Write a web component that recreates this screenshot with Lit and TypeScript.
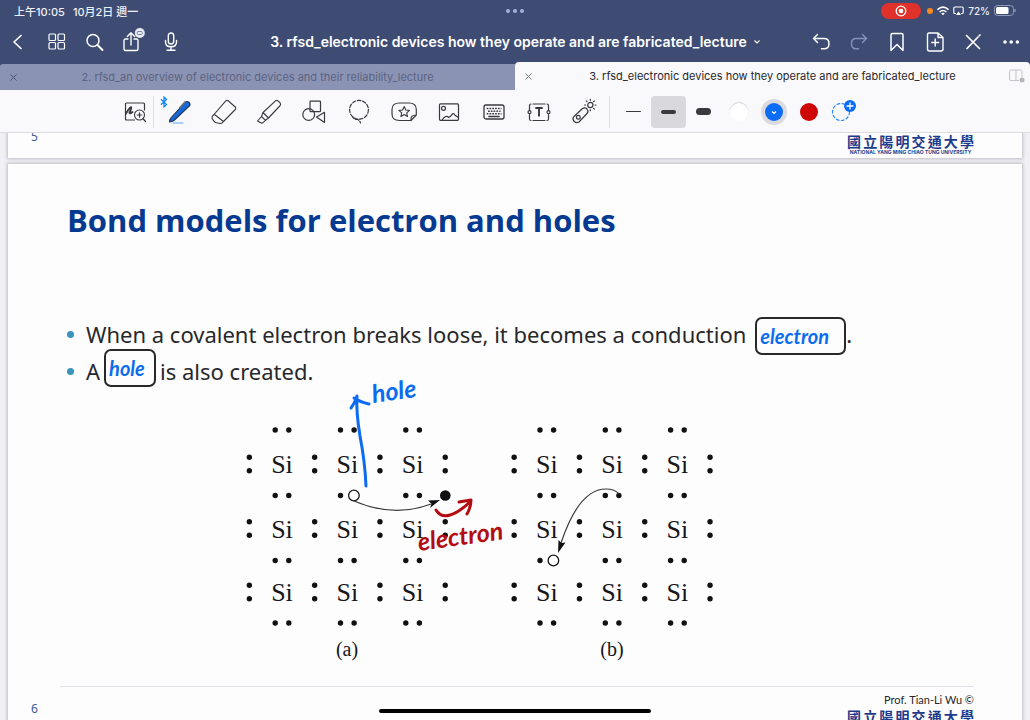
import { LitElement, html, svg, css, nothing, TemplateResult } from "lit";
import { customElement, property, state } from "lit/decorators.js";
import { classMap } from "lit/directives/class-map.js";

type Glyph = TemplateResult;

const ICONS: Record<string, Glyph> = {
  back: svg`<path d="M14 5.500 L7 12 L14 18.500" stroke-width="1.700"/>`,
  grid: svg`<rect x="4" y="4" width="6.500" height="6.500" rx="1"/><rect x="13" y="4" width="6.500" height="6.500" rx="1"/><rect x="4" y="12.500" width="6.500" height="6.500" rx="1"/><rect x="13" y="12.500" width="6.500" height="6.500" rx="1"/>`,
  search: svg`<circle cx="10" cy="10.500" r="6" stroke-width="1.500"/><path d="M14.500 15 L19.500 20" stroke-width="1.900"/>`,
  share: svg`<path d="M7 9 H4.500 Q3 9 3 10.500 V19 Q3 20.500 4.500 20.500 H15.500 Q17 20.500 17 19 V10.500 Q17 9 15.500 9 H13" stroke-width="1.400"/><path d="M10 15 V3 M6.300 6.500 L10 2.800 L13.700 6.500" stroke-width="1.400"/><circle cx="18.800" cy="3" r="5" fill="#e9ebf3" stroke="none"/><rect x="16.300" y="1.500" width="5" height="3" rx="1" stroke="#7b84a5" stroke-width="1"/>`,
  mic: svg`<rect x="9.300" y="3" width="5.400" height="11" rx="2.700" stroke-width="1.400"/><path d="M6.500 10.500 V12 Q6.500 16.800 12 16.800 Q17.500 16.800 17.500 12 V10.500 M12 17 V20 M8 20.300 H16" stroke-width="1.400"/>`,
  undo: svg`<path d="M8.500 4.500 L4.500 8.500 L8.500 12.500 M5 8.500 H15 Q20 8.500 20 13.500 Q20 18.800 15 18.800 H12.500" stroke-width="1.500"/>`,
  redo: svg`<path d="M15.500 4.500 L19.500 8.500 L15.500 12.500 M19 8.500 H9 Q4.500 8.500 4.500 13.500 Q4.500 18.800 9 18.800 H11.500" stroke-width="1.400"/>`,
  bookmark: svg`<path d="M6 20.500 V5 Q6 3.500 7.500 3.500 H16.500 Q18 3.500 18 5 V20.500 L12 14.500 Z" stroke-width="1.500"/>`,
  addPage: svg`<path d="M6 3 H15 L20 7.500 V19 Q20 21 18 21 H6.500 Q4.500 21 4.500 19 V5 Q4.500 3 6 3 Z M15 3 V7.500 H20 M12.200 9 V16 M8.700 12.500 H15.700" stroke-width="1.400"/>`,
  pencilOff: svg`<path d="M6 18.500 L17 7 M18.300 5.700 L19 5 M5.500 5.500 L18.500 18.500" stroke-width="1.700"/>`,
  more: svg`<g fill="currentColor" stroke="none"><circle cx="6" cy="12" r="1.800"/><circle cx="12.200" cy="12" r="1.800"/><circle cx="18.400" cy="12" r="1.800"/></g>`,
  lens: svg`<path d="M11.500 20 H3.500 Q2.500 20 2.500 19 V4 Q2.500 3 3.500 3 H20.500 Q21.500 3 21.500 4 V10" stroke-width="1.200"/><path d="M3 13.500 Q7.500 6 8.200 7.500 Q8.500 8.500 6.500 12.500 Q6.500 14.500 9.500 12" stroke-width="1.900"/><circle cx="16.500" cy="15" r="5" stroke-width="1.100"/><path d="M16.500 12.800 V17.200 M14.300 15 H18.700 M20 18.500 L22.500 21.500" stroke-width="1.200"/>`,
  pen: svg`<path d="M2.500 22 Q2.300 20 3.800 18 L17.500 3 Q19.500 0.500 22 2.300 Q24 4 22.200 6.200 L7.500 20 Q5 22 2.500 22 Z" fill="#1667d9" stroke="#253347" stroke-width="1.100"/><path d="M13 7.500 L18 2" stroke="#6a7078" stroke-width="1.800"/><path d="M6 23 H16" stroke="#5aa7f5" stroke-width="1.100"/>`,
  eraser: svg`<path d="M15.800 0.500 L23.300 7 Q24.300 8 23.300 9.500 L11.500 21.500 Q10.500 23.500 8 23.500 L3.500 22.500 Q0 19.500 0 17.500 Q0 16 2 14.500 L14 0.700 Q15 0 15.800 0.500 Z M2.500 14.500 L11.500 21.500" stroke-width="1.100"/>`,
  marker: svg`<path d="M6 12.500 L18.500 0.800 Q19.700 0 21 0.900 L23.200 3 Q24 4.200 23.200 5.500 L11.500 18 Z M6 12.500 L4.500 16.500 L8.500 20.300 L11.500 18 M4.500 16.500 L0.500 21 L5 23.300 L8.500 20.300" stroke-width="1.100"/>`,
  shapes: svg`<rect x="8" y="1.200" width="10.500" height="10.500" rx="0.800"/><circle cx="6.700" cy="14.500" r="5.900"/><path d="M14.500 17 L22.500 12.300 V22.500 Z"/>`,
  lasso: svg`<circle cx="12" cy="9.800" r="9.400" stroke-dasharray="3.500 1.800" stroke-width="1.200"/><path d="M5.500 16.500 Q6.500 19.500 10.500 19.500 Q13 20.500 13.500 23" stroke-dasharray="3 1.500" stroke-width="1.200"/>`,
  sticker: svg`<path d="M19 20.500 H7.500 Q0 20.500 0 14 V9.500 Q0 3 7.500 3 H17 Q24.300 3 24.300 9.500 V15 L19 20.500 Q18 15 24.300 15" stroke-width="1.200"/><path d="M12.200 6.500 L13.800 10 L17.500 10.400 L14.700 12.900 L15.500 16.500 L12.200 14.600 L8.900 16.500 L9.700 12.900 L6.900 10.400 L10.600 10 Z" stroke-width="1.100"/>`,
  image: svg`<rect x="2.500" y="3.800" width="19" height="16.500" rx="1"/><circle cx="6.500" cy="8.300" r="2"/><path d="M5 20 Q9 14.300 11.500 17.300 Q13.500 16.800 15.500 13.800 Q17 13.300 18 15.300 L21.500 17.500"/>`,
  keyboard: svg`<rect x="2" y="5" width="20" height="14" rx="2" stroke-width="1.300"/><path d="M4.700 8.500 H19.500 M6 11.200 H18.500 M4.700 13.800 H19.500" stroke-dasharray="1.700 1.100" stroke-linecap="butt" stroke-width="1.600"/><path d="M7 16.500 H17" stroke-width="1.700"/>`,
  text: svg`<path d="M2.500 10 V5.500 Q2.500 4 4 4 M6 4 H18 M20 4 Q21.500 4 21.500 5.500 V10 M21.500 14.500 V19 Q21.500 20.500 20 20.500 M18 20.500 H6 M4 20.500 Q2.500 20.500 2.500 19 V14.500" stroke-width="1.200"/><circle cx="2.500" cy="12.200" r="1.500"/><circle cx="21.500" cy="12.200" r="1.500"/><path d="M8.300 8 H15.700 M12 8 V16.500" stroke-width="1.900" stroke-linecap="butt"/>`,
  laser: svg`<path d="M1.500 17 L10.500 8.500 Q13 7 15 9 Q17 11.500 15 13.500 L7 22 Q4.500 23.300 2.300 21.500 Q0 19 1.500 17 Z"/><circle cx="6.300" cy="17.200" r="1.900"/><circle cx="18.300" cy="5" r="2.600"/><path d="M18.300 -0.700 V0.300 M18.300 9.700 V10.700 M12.600 5 H13.600 M23 5 H24 M14.300 1 L15 1.700 M22.300 1 L21.600 1.700 M22.300 9 L21.600 8.300"/>`,
};

const icon = (name: string) => html`<svg class="icon" viewBox="0 0 24 24" aria-hidden="true">${ICONS[name]}</svg>`;

@customElement("page-footer")
class PageFooter extends LitElement {
  @property() number = "";
  @property() author = "";

  static styles = css`
    :host { display: block; padding: 0 48px 0 23px; }
    .row { display: grid; grid-template-columns: 29px 1fr auto; height: 25px; }
    .row.full { height: 49px; }
    .number { grid-column: 1; grid-row: 1; color: #3b5a96; font: 12px/8px "Noto Sans", sans-serif; }
    .full .number { padding-top: 19px; }
    .rule { grid-column: 2 / 4; grid-row: 1; border-top: 1px solid #e0e0e6; }
    .credit { grid-column: 3; grid-row: 1; display: flex; flex-direction: column; width: 127px; }
    .full .credit { padding-top: 6px; }
    .author { font: 11px/16px Lato, sans-serif; color: #26262a; text-align: right; }
    .school { display: flex; justify-content: space-between; font: 700 14px/16px "Noto Sans CJK TC", sans-serif; color: #1d3a8a; }
    .latin { font: 700 5px/6px Inter, sans-serif; color: #26428c; text-align: center; white-space: nowrap; }
  `;

  render() {
    const full = this.author !== "";
    return html`<div class=${classMap({ row: true, full })}>
      <span class="number">${this.number}</span>
      ${full ? html`<span class="rule"></span>` : nothing}
      <div class="credit">
        ${full ? html`<span class="author">${this.author}</span>` : nothing}
        <span class="school">${[..."國立陽明交通大學"].map((c) => html`<span>${c}</span>`)}</span>
        <span class="latin">NATIONAL YANG MING CHIAO TUNG UNIVERSITY</span>
      </div>
    </div>`;
  }
}

@customElement("bond-figure")
class BondFigure extends LitElement {
  static styles = css`
    :host { display: block; }
    svg { display: block; width: 520px; max-width: 100%; overflow: visible; }
    .atom { font: 26px "Liberation Serif", serif; fill: #17171a; text-anchor: middle; }
    .caption { font: 20px "Liberation Serif", serif; fill: #17171a; text-anchor: middle; }
    .dot { fill: #111114; }
    .vacancy { fill: #fff; stroke: #17171a; stroke-width: 1.3; }
    .path { fill: none; stroke: #3a3a3e; stroke-width: 1.2; }
    .blue { fill: none; stroke: #0b6cf0; stroke-width: 3; stroke-linecap: round; stroke-linejoin: round; }
    .red { fill: none; stroke: #b30d12; stroke-width: 3; stroke-linecap: round; stroke-linejoin: round; }
    .note { font: italic 700 25px Lato, sans-serif; }
    .note-blue { fill: #0b6cf0; }
    .note-red { fill: #b30d12; }
  `;

  private lattice(x0: number, moved: string) {
    const pitch = 65.3;
    const rows = [464, 528.5, 592];
    const bonds = [430, 495.5, 560.5, 623];
    const cols = [0, 1, 2].map((i) => x0 + i * pitch);
    const dot = (x: number, y: number) => svg`<circle class="dot" cx=${x} cy=${y} r="2.7"/>`;
    return svg`
      ${rows.map((y) => svg`
        ${cols.map((x) => svg`<text class="atom" x=${x} y=${y + 9}>Si</text>`)}
        ${[-0.5, 0.5, 1.5, 2.5].map((i) => [dot(x0 + i * pitch, y - 6.7), dot(x0 + i * pitch, y + 6.7)])}`)}
      ${bonds.map((y, r) => cols.map((x, c) => [
        dot(x - 6.8, y),
        moved === `${r}${c}` ? svg`<circle class="vacancy" cx=${x + 6.6} cy=${y} r="5.3"/>` : dot(x + 6.8, y),
      ]))}`;
  }

  render() {
    return html`<svg viewBox="240 419 520 245" role="img" aria-label="Silicon bond model, panels a and b">
      ${this.lattice(282, "11")}
      ${this.lattice(546.8, "20")}
      <circle class="dot" cx="445.300" cy="495.500" r="5.300"/>
      <path class="path" d="M354 501 Q394 518 431 504"/>
      <path class="dot" d="M440 500 L428 500.500 L431.500 503.800 L430 508 Z"/>
      <path class="path" d="M619 494 Q615 489 606 489 Q579 489 561 543"/>
      <path class="dot" d="M558 553 L558.500 540 L561.500 543 L565.500 542.500 Z"/>
      <text class="caption" x="347" y="656">(a)</text>
      <text class="caption" x="612" y="656">(b)</text>
      <path class="blue" d="M366 486 Q365 462 360 436 Q356 412 357 397 M351 408 Q355 403 357 396 M354 398 Q360 402 369 404"/>
      <text class="note note-blue" transform="rotate(-8 373 403)" x="373" y="403">hole</text>
      <path class="red" d="M436 510 Q441 518 450 515 Q458 513 470 502 M459 502 L471 500 Q471 507 467 514"/>
      <text class="note note-red" transform="rotate(-8 419 551)" x="419" y="551">electron</text>
    </svg>`;
  }
}

const TOOLS = [
  ["eraser", "Eraser"], ["marker", "Highlighter"], ["shapes", "Shapes"], ["lasso", "Lasso"],
  ["sticker", "Elements"], ["image", "Image"], ["keyboard", "Keyboard"], ["text", "Text"], ["laser", "Laser pointer"],
];

@customElement("app-root")
class AppRoot extends LitElement {
  @state() private weight = 1;

  static styles = css`
    :host { display: flex; flex-direction: column; height: 100vh; overflow: hidden; position: relative; font-family: Inter, "Noto Sans CJK TC", sans-serif; background: #f1f0f5; }
    * { box-sizing: border-box; }
    button { appearance: none; border: 0; background: none; padding: 0; margin: 0; font: inherit; color: inherit; display: flex; align-items: center; justify-content: center; }
    .icon { width: 24px; height: 24px; fill: none; stroke: currentColor; stroke-width: 1.2; stroke-linecap: round; stroke-linejoin: round; overflow: visible; }
    .head { background: #3e4c74; color: #fff; }
    .status, .nav { display: grid; grid-template-columns: 1fr auto 1fr; align-items: center; }
    .status { height: 21px; padding: 0 14px; font-size: 11px; font-weight: 500; color: #eef0f8; }
    .clock { display: flex; gap: 8px; }
    .dots { display: flex; gap: 3px; }
    .dots i { width: 4px; height: 4px; border-radius: 50%; background: #a3b0dc; }
    .system { display: flex; justify-content: flex-end; align-items: center; gap: 4px; }
    .record { width: 40px; height: 16px; border-radius: 8px; background: #e0322b; display: flex; align-items: center; justify-content: center; margin-right: 2px; }
    .live { width: 6px; height: 6px; border-radius: 50%; background: #f68a1e; }
    .percent { font-size: 10px; }
    .nav { height: 41px; }
    .group { display: flex; }
    .group.end { justify-content: flex-end; }
    .group button { width: 38px; height: 38px; }
    .faded { color: #8791b4; }
    .title { font-size: 14px; font-weight: 600; gap: 7px; white-space: nowrap; margin: 0; }
    .tabs { display: grid; grid-template-columns: 1fr 1fr; align-items: end; height: 28px; }
    .tab { display: grid; grid-template-columns: 26px 1fr 26px; align-items: center; height: 26px; background: #8b93b4; color: #5b6383; font-size: 11px; border-top-left-radius: 3px; }
    .tab.active { height: 28px; background: #f9f8fb; color: #28282c; border-radius: 4px 4px 0 0; }
    .tab button { height: 26px; white-space: nowrap; }
    .tools { display: flex; align-items: center; height: 43px; background: #f9f8fb; border-bottom: 1px solid #dcdbe0; padding: 1px 0 0 117px; color: #3a3a3e; flex: none; }
    .tools button { position: relative; width: 45px; height: 34px; flex: none; }
    .tools .lens { width: 36px; }
    .sep { width: 1px; height: 32px; background: #dfdee3; margin: 0 2px 0 0; flex: none; }
    .sep.second { margin: 0 6px 0 3px; }
    .strokes, .swatches { display: flex; }
    .strokes button, .swatches button { width: 35px; }
    .strokes button { height: 32px; border-radius: 4px; }
    .strokes button.on { background: #d9d8dc; }
    .bar { background: #3a3a3e; border-radius: 4px; width: 15px; height: 2px; }
    .bar.light { height: 1px; }
    .bar.medium { height: 4px; }
    .bar.heavy { height: 7px; }
    .swatch { width: 18px; height: 18px; border-radius: 50%; display: flex; }
    .white { background: #fff; box-shadow: 0 -1px 1px #d2d2d6; }
    .bluedot { background: #0a6cf5; box-shadow: 0 0 0 4px #dbdade; }
    .reddot { background: #cf0606; }
    .bluetooth { position: absolute; left: 4px; top: 1px; width: 8px; height: 12px; }
    .desk { flex: 1; min-height: 0; overflow: hidden; display: flex; flex-direction: column; gap: 6px; padding: 0 8px; }
    .page { background: #fdfdfe; box-shadow: 0 0 3px 1px #bdbcc2; flex: none; }
    .body { padding: 36px 48px 22px 59px; }
    h1 { margin: 0 0 77px; font: 700 31px/40px "Open Sans", sans-serif; color: #063a90; }
    ul { margin: 0 0 28px; padding: 0; list-style: none; font: 22px/35px "Noto Sans", sans-serif; color: #28282b; white-space: nowrap; }
    li { display: flex; height: 37px; }
    li::before { content: ""; width: 7px; height: 7px; border-radius: 50%; background: #3a93b8; margin: 14px 12px 0 0; }
    .blank { position: relative; width: 52px; margin: 0 4px; }
    .blank.wide { width: 91px; margin: 0 0 0 9px; }
    .box { position: absolute; inset: -5px 0 4px; border: 2px solid #29292c; border-radius: 7px; background: #fdfdfe; display: flex; align-items: center; padding-left: 3px; font: italic 700 20px Lato, sans-serif; color: #0b6cf0; }
    .wide .box { inset: 0 0 -1px; }
    .figure { margin-left: 173px; }
    .home { position: absolute; left: 50%; bottom: 7px; width: 272px; height: 4px; margin-left: -136px; border-radius: 2px; background: #000; }
  `;

  private nav(name: string, label: string, faded = false) {
    return html`<button class=${classMap({ faded })} aria-label=${label}>${icon(name)}</button>`;
  }

  private tab(label: string, active: boolean) {
    return html`<div class=${classMap({ tab: true, active })}>
      <button aria-label="Close tab"><svg width="7" height="7" viewBox="0 0 7 7"><path d="M0.500 0.500 L6.500 6.500 M6.500 0.500 L0.500 6.500" stroke=${active ? "#77777c" : "#4d5575"} stroke-width="1"/></svg></button>
      <button>${label}</button>
      ${active ? html`<button aria-label="Split view"><svg width="16" height="14" viewBox="0 0 16 14" fill="none" stroke="#c3c3c8"><path d="M10 11.500 H2 Q0.500 11.500 0.500 10 V2.500 Q0.500 1 2 1 H11.500 Q13 1 13 2.500 V8 M7 1 V11.500"/><circle cx="13" cy="11" r="2.500" fill="#b5b5ba" stroke="none"/></svg></button>` : nothing}
    </div>`;
  }

  render() {
    return html`
      <header class="head">
        <div class="status">
          <div class="clock"><span>上午10:05</span><span>10月2日 週一</span></div>
          <div class="dots"><i></i><i></i><i></i></div>
          <div class="system">
            <span class="record"><svg width="12" height="12" viewBox="0 0 12 12"><circle cx="6" cy="6" r="4.800" fill="none" stroke="#fff" stroke-width="1.300"/><circle cx="6" cy="6" r="2.300" fill="#fff"/></svg></span>
            <i class="live"></i>
            <svg width="12" height="10" viewBox="0 0 12 10" fill="none" stroke="#fff" stroke-width="1.600"><path d="M0.500 3.700 Q6 -1.300 11.500 3.700 M2.600 6 Q6 3 9.400 6"/><path d="M6 9.300 L4.200 7.500 Q6 6 7.800 7.500 Z" fill="#fff" stroke="none"/></svg>
            <svg width="11" height="10" viewBox="0 0 11 10" fill="none" stroke="#fff" stroke-width="1.100"><path d="M3 7.500 H2 Q0.800 7.500 0.800 6.500 V2 Q0.800 1 2 1 H9 Q10.200 1 10.200 2 V6.500 Q10.200 7.500 9 7.500 H8"/><path d="M5.500 5.500 L8 9 H3 Z" fill="#fff" stroke="none"/></svg>
            <span class="percent">72%</span>
            <svg width="22" height="11" viewBox="0 0 22 11"><rect x="0.500" y="0.500" width="19" height="10" rx="3" fill="none" stroke="#8f99ba"/><rect x="2" y="2" width="12.500" height="7" rx="1.500" fill="#fff"/><path d="M21 4 V7" stroke="#8f99ba" stroke-width="1.300"/></svg>
          </div>
        </div>
        <nav class="nav">
          <div class="group">
            ${this.nav("back", "Back")}${this.nav("grid", "Thumbnails")}${this.nav("search", "Search")}${this.nav("share", "Share")}${this.nav("mic", "Record audio")}
          </div>
          <button class="title">3. rfsd_electronic devices how they operate and are fabricated_lecture
            <svg width="6" height="4" viewBox="0 0 6 4" fill="none" stroke="#fff" stroke-width="1.100"><path d="M0.500 0.500 L3 3 L5.500 0.500"/></svg>
          </button>
          <div class="group end">
            ${this.nav("undo", "Undo")}${this.nav("redo", "Redo", true)}${this.nav("bookmark", "Bookmark")}${this.nav("addPage", "Add page")}${this.nav("pencilOff", "Reading mode")}${this.nav("more", "More")}
          </div>
        </nav>
        <div class="tabs">
          ${this.tab("2. rfsd_an overview of electronic devices and their reliability_lecture", false)}
          ${this.tab("3. rfsd_electronic devices how they operate and are fabricated_lecture", true)}
        </div>
      </header>
      <div class="tools" role="toolbar">
        <button class="lens" aria-label="Zoom window">${icon("lens")}</button>
        <span class="sep"></span>
        <button aria-label="Pen">${icon("pen")}<svg class="bluetooth" viewBox="0 0 8 12" fill="none" stroke="#0a84f5" stroke-width="1.200"><path d="M1 3.300 L6.500 8.500 L4 11 V1 L6.500 3.500 L1 8.700"/></svg></button>
        ${TOOLS.map(([n, l]) => html`<button aria-label=${l}>${icon(n)}</button>`)}
        <span class="sep second"></span>
        <span class="strokes">
          ${["light", "medium", "heavy"].map((w, i) => html`<button class=${classMap({ on: this.weight === i })} aria-label="${w} stroke" @click=${() => (this.weight = i)}><span class="bar ${w}"></span></button>`)}
        </span>
        <span class="swatches">
          <button aria-label="White"><span class="swatch white"></span></button>
          <button aria-label="Blue"><span class="swatch bluedot"><svg width="18" height="18" viewBox="0 0 18 18" fill="none" stroke="#fff" stroke-width="1.200"><path d="M7 8.500 L9 10.500 L11 8.500"/></svg></span></button>
          <button aria-label="Red"><span class="swatch reddot"></span></button>
          <button aria-label="Add colour"><svg class="icon" viewBox="0 0 24 24"><circle cx="9" cy="12" r="8.500" stroke="#2b8af0" stroke-dasharray="2.700 2.400" stroke-width="1.200"/><circle cx="18" cy="6" r="6" fill="#0a6cf5" stroke="none"/><path d="M18 3 V9 M15 6 H21" stroke="#fff" stroke-width="1.300"/></svg></button>
        </span>
      </div>
      <main class="desk">
        <section class="page"><page-footer number="5"></page-footer></section>
        <section class="page">
          <div class="body">
            <h1>Bond models for electron and holes</h1>
            <ul>
              <li><span>When a covalent electron breaks loose, it becomes a conduction</span><span class="blank wide"><span class="box">electron</span></span><span>.</span></li>
              <li><span>A</span><span class="blank"><span class="box">hole</span></span><span>is also created.</span></li>
            </ul>
            <bond-figure class="figure"></bond-figure>
          </div>
          <page-footer number="6" author="Prof. Tian-Li Wu ©"></page-footer>
        </section>
      </main>
      <div class="home"></div>`;
  }
}
